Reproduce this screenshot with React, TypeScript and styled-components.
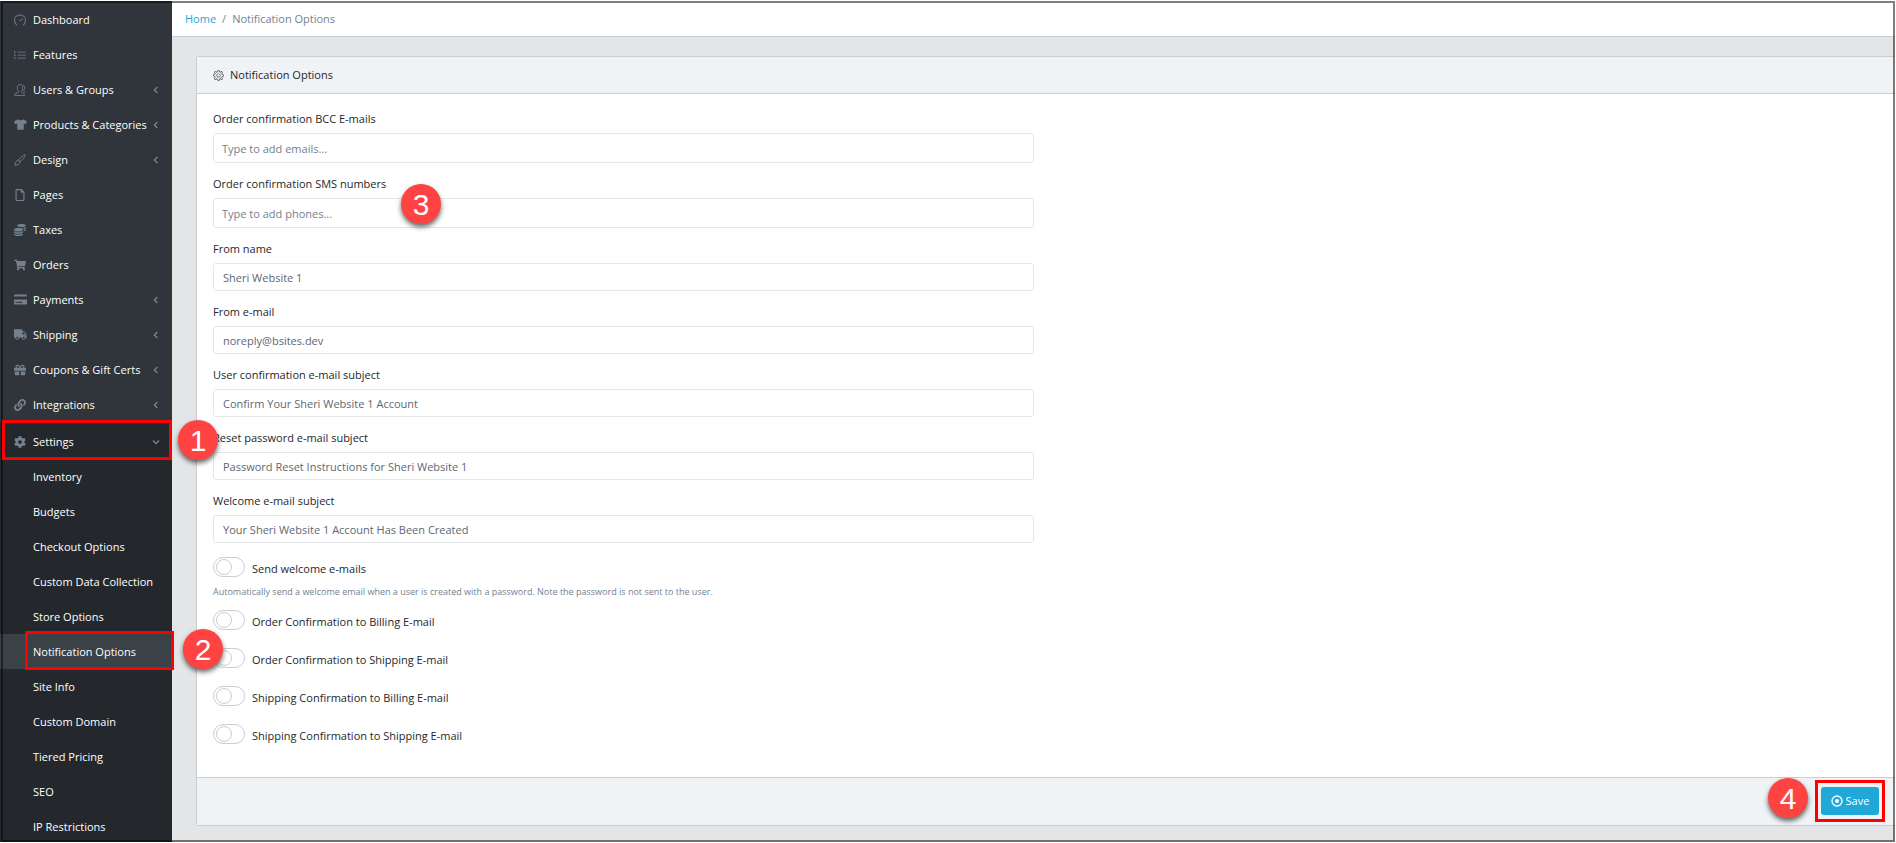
import React from "react";
import styled, { createGlobalStyle, css } from "styled-components";
import {
  FaTshirt, FaCoins, FaShoppingCart, FaCreditCard, FaTruck, FaGift, FaLink, FaCog,
} from "react-icons/fa";
import { SlSpeedometer, SlList, SlSettings } from "react-icons/sl";
import { FaRegFile } from "react-icons/fa6";

const GlobalStyle = createGlobalStyle`
  *, *::before, *::after { box-sizing: border-box; }
  body {
    margin: 0;
    background: #fff;
    color: #23282c;
    font: 11px/18px "Open Sans", "Noto Sans", sans-serif;
  }
  input, button { font: inherit; }
`;

const Frame = styled.div`
  position: relative;
  display: flex;
  height: 100vh;
  overflow: hidden;
  border-top: 1px solid #fff;
  border-right: 1px solid #fff;
  border-bottom: 1px solid #fff;

  &::after {
    content: "";
    position: absolute;
    inset: 0 0 0 1px;
    border: 2px solid rgba(0, 0, 0, 0.5);
    pointer-events: none;
  }
`;

const Sidebar = styled.nav`
  flex: 0 0 172px;
  min-width: 0;
  background: #2f353a;
`;

const NavList = styled.ul`
  list-style: none;
  margin: 0;
  padding: 1px 0;
`;

const NavItem = styled.li`
  position: relative;
`;

const Group = styled.div`
  background: #24282c;
`;

const NavLink = styled.a<{ $active?: boolean }>`
  display: flex;
  align-items: center;
  height: 35px;
  padding: 0 12px;
  color: #fff;
  text-decoration: none;
  white-space: nowrap;
  ${(p) => p.$active && css`background: #3a4248;`}
`;

const NavIcon = styled.span`
  display: flex;
  flex: none;
  justify-content: center;
  width: 16px;
  margin-right: 5px;
  color: #73818f;
`;

const Caret = styled.svg<{ $open?: boolean }>`
  flex: none;
  width: 8px;
  height: 8px;
  margin-left: auto;
  fill: none;
  stroke: #73818f;
  stroke-width: 1.4;
  transform: ${(p) => (p.$open ? "rotate(-90deg)" : "none")};
`;

const Main = styled.main`
  flex: 1;
  min-width: 0;
  background: #e4e5e6;
`;

const Breadcrumb = styled.ol`
  display: flex;
  align-items: center;
  list-style: none;
  height: 36px;
  margin: 0;
  padding: 0 13px;
  background: #fff;
  border-bottom: 1px solid #c8ced3;
  color: #73818f;
`;

const Crumb = styled.li`
  & + &::before {
    content: "/";
    padding: 0 6px;
  }
`;

const HomeLink = styled.a`
  color: #20a8d8;
  text-decoration: none;
`;

const Card = styled.section`
  margin: 19px 0 0 24px;
  background: #fff;
  border: 1px solid #c8ced3;
  border-right: 0;
  border-radius: 3px 0 0 3px;
`;

const CardHeader = styled.h1`
  display: flex;
  align-items: center;
  gap: 6px;
  height: 37px;
  margin: 0;
  padding: 0 16px;
  background: #eff3f6;
  border-bottom: 1px solid #c8ced3;
  font-size: 11px;
  font-weight: 400;
`;

const HeaderIcon = styled(SlSettings)`
  width: 11px;
  height: 11px;
  color: #444a50;
`;

const CardBody = styled.div`
  display: grid;
  grid-template-columns: 1fr 1fr;
  column-gap: 30px;
  padding: 16px 10px 15px 16px;
`;

const Field = styled.div`
  position: relative;
  display: flex;
  flex-direction: column;
  gap: 5px;
  margin-bottom: 12px;
`;

const TextInput = styled.input<{ $tags?: boolean }>`
  width: 100%;
  height: ${(p) => (p.$tags ? 30 : 28)}px;
  padding: 0 ${(p) => (p.$tags ? 8 : 9)}px;
  border: 1px solid #e4e7ea;
  border-radius: 3px;
  background: #fff;
  color: #5c6873;
  &::placeholder { color: #73818f; opacity: 1; }
`;

const SwitchRow = styled.label`
  display: flex;
  gap: 7px;
  height: 21px;
  margin-bottom: 17px;
`;

const FirstSwitch = styled.div`
  padding-top: 2px;
  ${SwitchRow} { margin-bottom: 6px; }
`;

const SwitchText = styled.span`
  padding-top: 3px;
`;

const Switch = styled.input`
  appearance: none;
  flex: none;
  width: 32px;
  height: 20px;
  margin: 0;
  padding: 1px 2px;
  border: 1px solid #c8ced3;
  border-radius: 10px;
  background: #fff;

  &::before {
    content: "";
    display: block;
    width: 16px;
    height: 16px;
    border: 1px solid #c8ced3;
    border-radius: 50%;
  }
  &:checked::before { margin-left: auto; }
`;

const Help = styled.p`
  margin: 0 0 10px;
  color: #73818f;
  font-size: 9px;
  line-height: 16px;
`;

const CardFooter = styled.footer`
  display: flex;
  justify-content: flex-end;
  padding: 9px 16px 10px;
  background: #eff3f6;
  border-top: 1px solid #c8ced3;
`;

const SaveWrap = styled.div`
  position: relative;
`;

const SaveButton = styled.button`
  display: flex;
  align-items: center;
  justify-content: center;
  gap: 3px;
  width: 58px;
  height: 28px;
  padding: 0;
  border: 0;
  border-radius: 3px;
  background: #20a8d8;
  color: #fff;
`;

const Outline = styled.span<{ $inset: string }>`
  position: absolute;
  z-index: 1;
  inset: ${(p) => p.$inset};
  border: 3px solid #f00;
  pointer-events: none;
`;

const Badge = styled.span<{ $left: string; $top: number }>`
  position: absolute;
  z-index: 2;
  left: ${(p) => p.$left};
  top: ${(p) => p.$top}px;
  width: 40px;
  height: 40px;
  border-radius: 50%;
  background: #ff4343;
  box-shadow: 0 3px 5px rgba(0, 0, 0, 0.6);
  color: #fff;
  font: 30px/42px "Liberation Sans", Arial, sans-serif;
  text-align: center;
`;

const Chevron = ({ open }: { open?: boolean }) => (
  <Caret viewBox="0 0 8 8" $open={open} aria-hidden="true">
    <path d="M5.4 1 2.4 4l3 3" />
  </Caret>
);

const UsersIcon = () => (
  <svg width="12" height="12" viewBox="0 0 12 12" fill="none" stroke="currentColor" strokeWidth="0.9" aria-hidden="true">
    <path d="M5 7.6C3.6 6.6 3 5.2 3.200 3.400 3.400 1.600 4.400.6 6 .6s2.600 1 2.700 2.800C8.800 5.200 8.300 6.600 7 7.600c.2 1 2.600 1.200 3.200 2.200.2.400.2 1 .2 1.600H.6c0-.6 0-1.200.2-1.600C1.400 8.800 4.800 8.600 5 7.600Z" />
    <path d="M9 1.200c1.300.3 1.800 1.200 1.700 2.600-.1 1.200-.5 2-1.300 2.700.2.900 1.600 1 2 1.900" />
  </svg>
);

const BrushIcon = () => (
  <svg width="12" height="12" viewBox="0 0 12 12" fill="none" stroke="currentColor" strokeWidth="0.9" strokeLinejoin="round" aria-hidden="true">
    <path d="M4.400 6.300C6 3.600 8.600 1.500 11.300.7 10.600 3.400 8.600 6 5.900 7.700Z" />
    <path d="M4.400 6.300C2.600 6.200 1.800 7.300 1.700 8.700 1.600 9.800 1.200 10.500.6 11c2.700.5 5.400-.6 5.300-3.300Z" />
  </svg>
);

const menu: { label: string; icon: React.ReactNode; nested?: boolean }[] = [
  { label: "Dashboard", icon: <SlSpeedometer size={12} /> },
  { label: "Features", icon: <SlList size={12} /> },
  { label: "Users & Groups", icon: <UsersIcon />, nested: true },
  { label: "Products & Categories", icon: <FaTshirt size={13} />, nested: true },
  { label: "Design", icon: <BrushIcon />, nested: true },
  { label: "Pages", icon: <FaRegFile size={12} /> },
  { label: "Taxes", icon: <FaCoins size={12} /> },
  { label: "Orders", icon: <FaShoppingCart size={12} /> },
  { label: "Payments", icon: <FaCreditCard size={13} />, nested: true },
  { label: "Shipping", icon: <FaTruck size={13} />, nested: true },
  { label: "Coupons & Gift Certs", icon: <FaGift size={12} />, nested: true },
  { label: "Integrations", icon: <FaLink size={12} />, nested: true },
];

const settings = [
  "Inventory", "Budgets", "Checkout Options", "Custom Data Collection", "Store Options",
  "Notification Options", "Site Info", "Custom Domain", "Tiered Pricing", "SEO", "IP Restrictions",
];

const fields = [
  { id: "from-name", label: "From name", value: "Sheri Website 1" },
  { id: "from-email", label: "From e-mail", value: "noreply@bsites.dev" },
  { id: "confirm-subject", label: "User confirmation e-mail subject", value: "Confirm Your Sheri Website 1 Account" },
  { id: "reset-subject", label: "Reset password e-mail subject", value: "Password Reset Instructions for Sheri Website 1" },
  { id: "welcome-subject", label: "Welcome e-mail subject", value: "Your Sheri Website 1 Account Has Been Created" },
];

const switches = [
  "Order Confirmation to Billing E-mail",
  "Order Confirmation to Shipping E-mail",
  "Shipping Confirmation to Billing E-mail",
  "Shipping Confirmation to Shipping E-mail",
];

export default function App() {
  return (
    <Frame>
      <GlobalStyle />
      <Sidebar>
        <NavList>
          {menu.map((m) => (
            <NavItem key={m.label}>
              <NavLink href="#">
                <NavIcon>{m.icon}</NavIcon>
                {m.label}
                {m.nested && <Chevron />}
              </NavLink>
            </NavItem>
          ))}
        </NavList>
        <Group>
          <NavList>
            <NavItem>
              <NavLink href="#">
                <NavIcon><FaCog size={12} /></NavIcon>
                Settings
                <Chevron open />
              </NavLink>
              <Outline $inset="-4px 0 -1px 2px" />
              <Badge $left="178px" $top={-4}>1</Badge>
            </NavItem>
            {settings.map((s) => {
              const active = s === "Notification Options";
              return (
                <NavItem key={s}>
                  <NavLink href="#" $active={active}>
                    <NavIcon />
                    {s}
                  </NavLink>
                  {active && <Outline $inset="-3px -2px -1px 25px" />}
                  {active && <Badge $left="183px" $top={-5}>2</Badge>}
                </NavItem>
              );
            })}
          </NavList>
        </Group>
      </Sidebar>
      <Main>
        <Breadcrumb>
          <Crumb><HomeLink href="#">Home</HomeLink></Crumb>
          <Crumb>Notification Options</Crumb>
        </Breadcrumb>
        <Card>
          <CardHeader><HeaderIcon />Notification Options</CardHeader>
          <CardBody>
            <div>
              <Field>
                <label htmlFor="bcc">Order confirmation BCC E-mails</label>
                <TextInput id="bcc" $tags placeholder="Type to add emails..." />
              </Field>
              <Field>
                <label htmlFor="sms">Order confirmation SMS numbers</label>
                <TextInput id="sms" $tags placeholder="Type to add phones..." />
                <Badge $left="188px" $top={9}>3</Badge>
              </Field>
              {fields.map((f) => (
                <Field key={f.id}>
                  <label htmlFor={f.id}>{f.label}</label>
                  <TextInput id={f.id} defaultValue={f.value} />
                </Field>
              ))}
              <FirstSwitch>
                <SwitchRow>
                  <Switch type="checkbox" />
                  <SwitchText>Send welcome e-mails</SwitchText>
                </SwitchRow>
                <Help>
                  Automatically send a welcome email when a user is created with a password. Note the password is not sent to the user.
                </Help>
              </FirstSwitch>
              {switches.map((s) => (
                <SwitchRow key={s}>
                  <Switch type="checkbox" />
                  <SwitchText>{s}</SwitchText>
                </SwitchRow>
              ))}
            </div>
          </CardBody>
          <CardFooter>
            <SaveWrap>
              <SaveButton type="button">
                <svg width="12" height="12" viewBox="0 0 12 12" aria-hidden="true">
                  <circle cx="6" cy="6" r="5" fill="none" stroke="currentColor" strokeWidth="1.3" />
                  <circle cx="6" cy="6" r="2" fill="currentColor" />
                </svg>
                Save
              </SaveButton>
              <Outline $inset="-7px -6px" />
              <Badge $left="-53px" $top={-9}>4</Badge>
            </SaveWrap>
          </CardFooter>
        </Card>
      </Main>
    </Frame>
  );
}
